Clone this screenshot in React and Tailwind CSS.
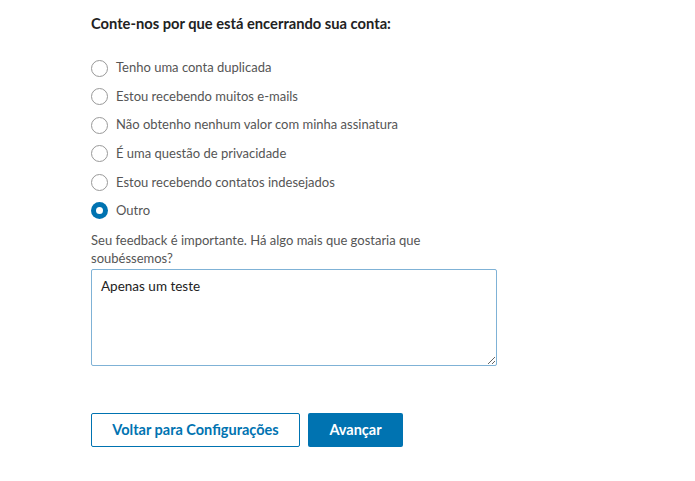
import React, { useState } from 'react';

const reasons = [
  'Tenho uma conta duplicada',
  'Estou recebendo muitos e-mails',
  'Não obtenho nenhum valor com minha assinatura',
  'É uma questão de privacidade',
  'Estou recebendo contatos indesejados',
  'Outro',
];

export default function App() {
  const [selected, setSelected] = useState('Outro');
  const [feedback, setFeedback] = useState('Apenas um teste');

  return (
    <div className="min-h-screen bg-white pl-[91px] pt-[11px] font-['Lato',sans-serif]">
      <div className="w-[406px]">
        {/* Heading */}
        <h2 className="text-[14.7px] font-bold leading-[24px] text-[#222]">
          Conte-nos por que está encerrando sua conta:
        </h2>

        {/* Reasons */}
        <div className="mt-[24px] flex flex-col gap-[10.6px]">
          {reasons.map((r) => (
            <label key={r} className="flex h-[18px] cursor-pointer items-center gap-[8px]" onClick={() => setSelected(r)}>
              {selected === r ? (
                <span className="flex h-[17px] w-[17px] items-center justify-center rounded-full bg-[#0073b1]">
                  <span className="h-[7px] w-[7px] rounded-full bg-white"></span>
                </span>
              ) : (
                <span className="h-[17px] w-[17px] rounded-full border border-[#999]"></span>
              )}
              <span className="text-[13px] text-[#555]">{r}</span>
            </label>
          ))}
        </div>

        {/* Feedback */}
        <p className="mt-[11px] text-[13px] leading-[18px] text-[#555]">
          Seu feedback é importante. Há algo mais que gostaria que soubéssemos?
        </p>
        <textarea
          value={feedback}
          onChange={(e) => setFeedback(e.target.value)}
          className="mt-[2px] block h-[97px] w-[406px] resize-y rounded-[2px] border border-[#7fb2d6] px-[9px] py-[6px] text-[13.5px] text-[#222] outline-none"
        />

        {/* Actions */}
        <div className="mt-[47px] flex gap-[8px]">
          <button className="h-[34px] w-[209px] rounded-[2px] border border-[#0073b1] bg-white text-[14.5px] font-bold text-[#0073b1]">
            Voltar para Configurações
          </button>
          <button className="h-[34px] w-[95px] rounded-[2px] bg-[#0073b1] text-[14.5px] font-bold text-white">
            Avançar
          </button>
        </div>
      </div>
    </div>
  );
}
